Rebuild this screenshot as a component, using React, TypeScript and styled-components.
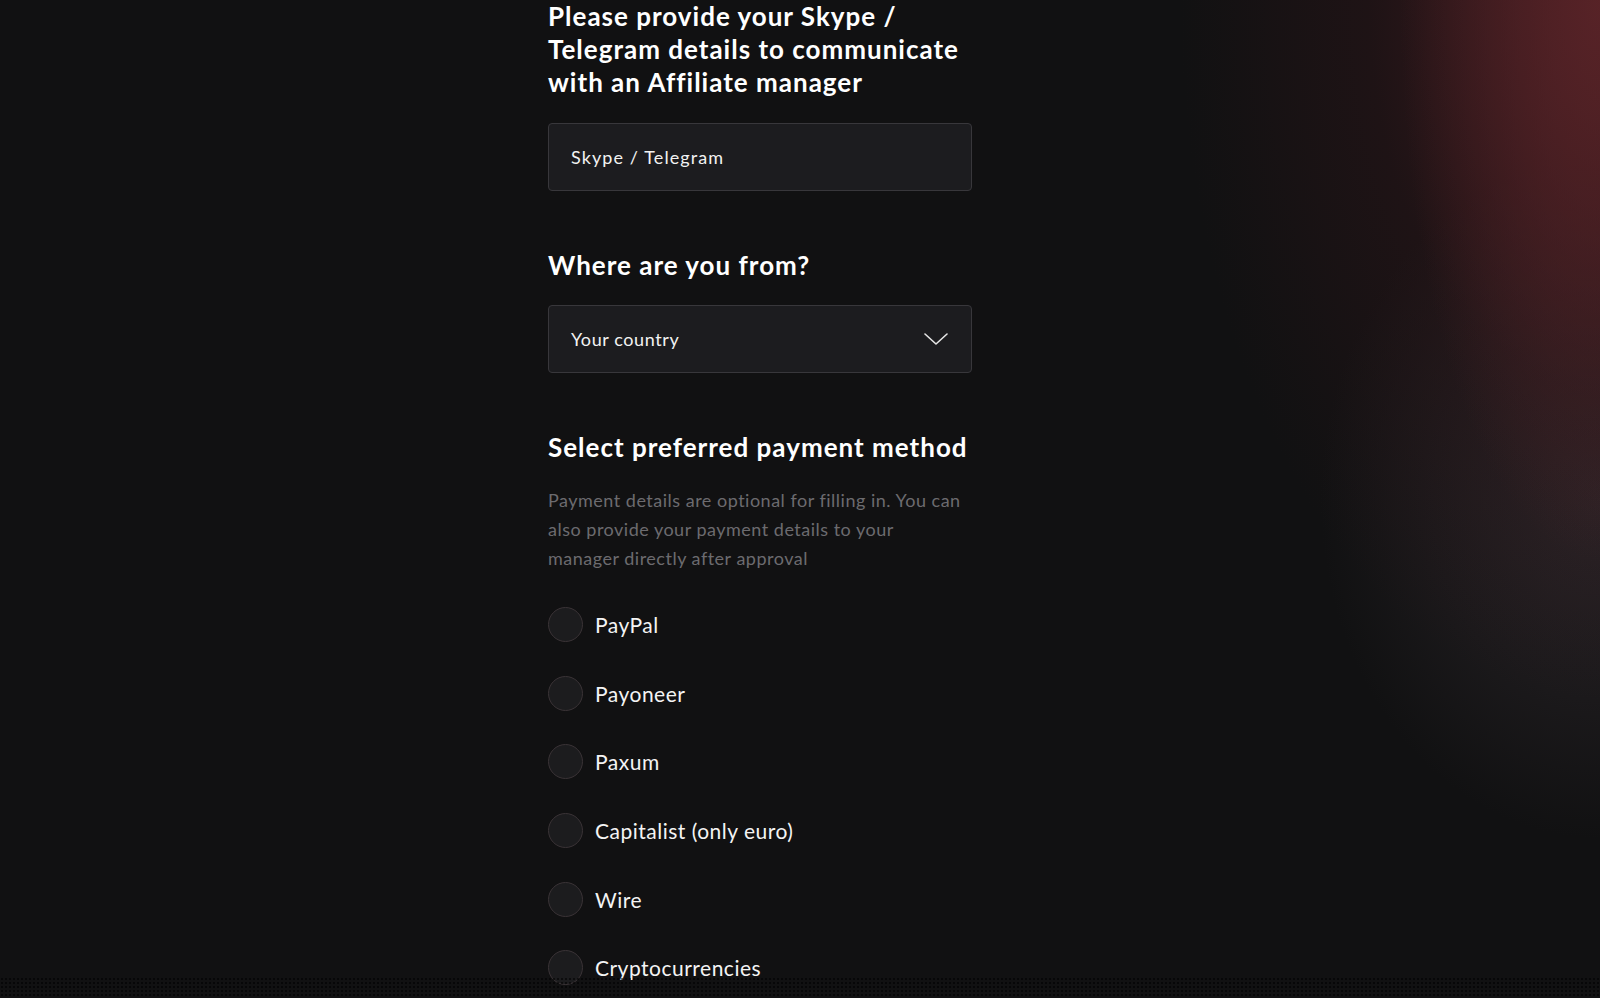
import React from "react";
import styled, { createGlobalStyle } from "styled-components";

const GlobalStyle = createGlobalStyle`
  html, body {
    margin: 0;
    padding: 0;
  }
  body {
    min-height: 998px;
    font-family: "Lato", "Open Sans", sans-serif;
    color: #ffffff;
    background-color: #111112;
    background-image:
      radial-gradient(ellipse 200px 560px at 100% 0%, rgba(90, 36, 40, 0.85), rgba(17, 17, 18, 0) 100%),
      radial-gradient(ellipse 420px 700px at 100% 0%, rgba(82, 30, 36, 0.8), rgba(50, 22, 26, 0.4) 55%, rgba(17, 17, 18, 0) 100%),
      radial-gradient(ellipse 280px 340px at 100% 50%, rgba(66, 56, 62, 0.5), rgba(17, 17, 18, 0) 100%);
    background-repeat: no-repeat;
    background-attachment: fixed;
  }
  body::after {
    content: "";
    position: fixed;
    left: 0;
    right: 0;
    bottom: 0;
    height: 21px;
    pointer-events: none;
    background-image: radial-gradient(circle, rgba(0, 0, 0, 0.55) 0.8px, transparent 1.2px);
    background-size: 4px 4px;
  }
`;

const Page = styled.main`
  display: grid;
  grid-template-columns: 548px 424px 1fr;
  min-height: 998px;
`;

const Form = styled.form`
  grid-column: 2;
  display: flex;
  flex-direction: column;
`;

const Section = styled.section<{ $after?: number }>`
  display: flex;
  flex-direction: column;
  margin-bottom: ${(p) => p.$after ?? 0}px;
`;

const Heading = styled.h2<{ $below: number }>`
  margin: 0 0 ${(p) => p.$below}px;
  font-size: 26px;
  line-height: 33px;
  font-weight: 700;
  letter-spacing: 1px;
  color: #ffffff;
`;

const TextInput = styled.input`
  box-sizing: border-box;
  height: 68px;
  width: 100%;
  padding: 0 22px;
  border: 1.5px solid #38373b;
  border-radius: 4px;
  background: #1c1c1f;
  font-family: inherit;
  font-size: 18px;
  letter-spacing: 1.1px;
  color: #ffffff;
  outline: none;
  &::placeholder {
    color: #f2f2f2;
    opacity: 1;
  }
`;

const SelectBox = styled.div`
  box-sizing: border-box;
  height: 68px;
  width: 100%;
  padding: 0 22px;
  display: flex;
  align-items: center;
  justify-content: space-between;
  border: 1.5px solid #38373b;
  border-radius: 4px;
  background: #1c1c1f;
  font-size: 18px;
  letter-spacing: 0.6px;
  color: #f2f2f2;
  cursor: pointer;
`;

const Chevron = styled.svg`
  width: 24px;
  height: 12px;
  margin-right: 1px;
`;

const Note = styled.p`
  margin: 0 0 34px;
  max-width: 418px;
  font-size: 18px;
  line-height: 29px;
  font-weight: 400;
  letter-spacing: 0.5px;
  color: #6c6b6f;
`;

const RadioList = styled.div`
  display: flex;
  flex-direction: column;
  gap: 33.7px;
`;

const RadioRow = styled.label`
  display: flex;
  align-items: center;
  gap: 12px;
  height: 35px;
  font-size: 21px;
  letter-spacing: 0.5px;
  color: #f4f4f4;
  cursor: pointer;
`;

const RadioDot = styled.span`
  box-sizing: border-box;
  width: 35px;
  height: 35px;
  border-radius: 50%;
  border: 1.5px solid #3a3336;
  background: #1c1c1e;
  flex-shrink: 0;
`;

const methods = [
  "PayPal",
  "Payoneer",
  "Paxum",
  "Capitalist (only euro)",
  "Wire",
  "Cryptocurrencies",
];

export default function App() {
  return (
    <>
      <GlobalStyle />
      <Page>
        <Form onSubmit={(e) => e.preventDefault()}>
          <Section $after={58}>
            <Heading $below={24}>
              Please provide your Skype / Telegram details to communicate with an Affiliate manager
            </Heading>
            <TextInput placeholder="Skype / Telegram" />
          </Section>
          <Section $after={58}>
            <Heading $below={23}>Where are you from?</Heading>
            <SelectBox>
              <span>Your country</span>
              <Chevron viewBox="0 0 24 12" fill="none">
                <polyline
                  points="1,1 12,11 23,1"
                  stroke="#e6e6e6"
                  strokeWidth="1.6"
                  strokeLinecap="round"
                  strokeLinejoin="round"
                />
              </Chevron>
            </SelectBox>
          </Section>
          <Section>
            <Heading $below={22}>Select preferred payment method</Heading>
            <Note>
              Payment details are optional for filling in. You can also provide your payment details to your
              manager directly after approval
            </Note>
            <RadioList>
              {methods.map((m) => (
                <RadioRow key={m}>
                  <RadioDot />
                  {m}
                </RadioRow>
              ))}
            </RadioList>
          </Section>
        </Form>
      </Page>
    </>
  );
}
